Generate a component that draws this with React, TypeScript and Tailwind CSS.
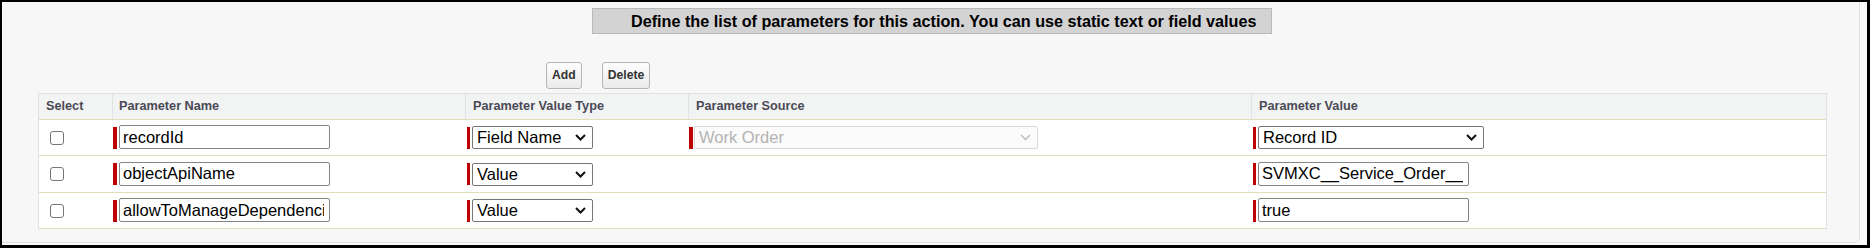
const font = "font-['Liberation_Sans',Arial,Helvetica,sans-serif]";

type Row = {
  name: string;
  valueType: string;
  source?: string;
  value: string;
  valueIsPicklist?: boolean;
  height: string;
};

const rows: Row[] = [
  { name: "recordId", valueType: "Field Name", source: "Work Order", value: "Record ID", valueIsPicklist: true, height: "h-[36px]" },
  { name: "objectApiName", valueType: "Value", value: "SVMXC__Service_Order__c", height: "h-[37px]" },
  { name: "allowToManageDependencies", valueType: "Value", value: "true", height: "h-[36px]" },
];

function Chevron({ muted }: { muted?: boolean }) {
  return (
    <svg width="11" height="7" viewBox="0 0 11 7" className="shrink-0">
      <path
        d="M1 1 L5.5 5.5 L10 1"
        fill="none"
        stroke={muted ? "#b8b8b8" : "#111"}
        strokeWidth={muted ? 1.3 : 2}
      />
    </svg>
  );
}

function Picklist({ label, width, disabled }: { label: string; width: string; disabled?: boolean }) {
  return (
    <div
      className={`${width} h-[23px] flex items-center justify-between pl-[4px] pr-[6px] rounded-[2px] border text-[16.5px] leading-none ${
        disabled ? "border-[#d9d9d9] bg-[#fbfbfb] text-[#b3b3b3]" : "border-[#767676] bg-white text-black"
      }`}
    >
      <span className="truncate">{label}</span>
      <Chevron muted={disabled} />
    </div>
  );
}

function Required({ pad, bar, gap, children }: { pad: string; bar: string; gap: string; children: React.ReactNode }) {
  return (
    <div className={`flex items-center ${pad}`}>
      <span className={`${bar} h-[22px] bg-[#c00000]`} />
      <div className={gap}>{children}</div>
    </div>
  );
}

function TextBox({ value }: { value: string }) {
  return (
    <input
      readOnly
      value={value}
      className="w-[211px] h-[24px] pl-[3px] pr-[5px] border border-[#858585] rounded-[2px] bg-white text-[16.5px] text-black outline-none"
    />
  );
}

const cols = "grid grid-cols-[73px_353px_223px_563px_575px]";

export default function App() {
  return (
    <div className={`w-[1870px] h-[248px] overflow-hidden border-black border-t-2 border-l-2 border-r-[3px] border-b-[3px] bg-[#fbfbfb] ${font}`}>
      <div className="w-[1858px] h-[241px] bg-[#f7f7f7] border-r border-b border-[#e1e1e1] rounded-br-[5px] pt-[6px]">
        <div className="ml-[590px] w-[680px] h-[26px] bg-[#d3d3d3] border border-[#bababa] pl-[38px] flex items-center">
          <span className="text-[16.2px] font-bold text-black leading-none">
            Define the list of parameters for this action. You can use static text or field values
          </span>
        </div>

        <div className="mt-[28px] ml-[544px] flex gap-[20px]">
          {["Add", "Delete"].map((b) => (
            <button
              key={b}
              className="h-[27px] px-[5px] border border-[#b5b5b5] rounded-[3px] bg-linear-to-b from-[#fdfdfd] to-[#ebebeb] text-[12.2px] font-bold text-[#333]"
            >
              {b}
            </button>
          ))}
        </div>

        <div className="mt-[4px] ml-[36px] w-[1789px] border border-b-0 border-[#e0e3e5]">
          <div className={`${cols} h-[26px] bg-[#f2f3f3] border-b border-[#e3deb8] text-[12.7px] font-bold text-[#4a4a56]`}>
            <div className="flex items-center pl-[7px]">Select</div>
            <div className="flex items-center pl-[6px] border-l border-[#e0e3e5]">Parameter Name</div>
            <div className="flex items-center pl-[7px] border-l border-[#e0e3e5]">Parameter Value Type</div>
            <div className="flex items-center pl-[7px] border-l border-[#e0e3e5]">Parameter Source</div>
            <div className="flex items-center pl-[7px] border-l border-[#e0e3e5]">Parameter Value</div>
          </div>

          {rows.map((r) => (
            <div key={r.name} className={`${cols} ${r.height} bg-white border-b border-[#e3deb8]`}>
              <div className="flex items-center pl-[11px]">
                <span className="w-[14px] h-[14px] border border-[#767676] rounded-[3px] bg-white" />
              </div>
              <Required pad="pl-[1px]" bar="w-[4px]" gap="ml-[2px]">
                <TextBox value={r.name} />
              </Required>
              <Required pad="pl-[2px]" bar="w-[3px]" gap="ml-[2px]">
                <Picklist label={r.valueType} width="w-[121px]" />
              </Required>
              <div className="flex items-center">
                {r.source && (
                  <Required pad="pl-[1px]" bar="w-[4px]" gap="ml-[1px]">
                    <Picklist label={r.source} width="w-[344px]" disabled />
                  </Required>
                )}
              </div>
              <Required pad="pl-[2px]" bar="w-[3px]" gap="ml-[2px]">
                {r.valueIsPicklist ? <Picklist label={r.value} width="w-[226px]" /> : <TextBox value={r.value} />}
              </Required>
            </div>
          ))}
        </div>
      </div>
    </div>
  );
}
